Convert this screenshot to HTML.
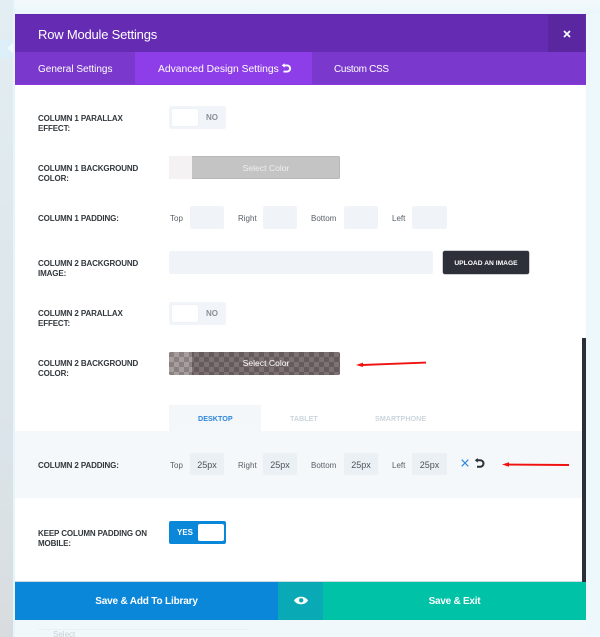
<!DOCTYPE html>
<html><head><meta charset="utf-8"><style>
html,body{margin:0;padding:0}
#p{position:relative;width:600px;height:637px;overflow:hidden;background:#edf7fc;font-family:"Liberation Sans",sans-serif;filter:blur(.3px)}
#p div,#p svg{position:absolute;box-sizing:border-box}
.t{white-space:nowrap}
.l{left:38px;margin-top:1px;font-size:8px;font-weight:bold;line-height:10px;color:#32373c;letter-spacing:-.13px;white-space:nowrap}
.s{margin-top:1px;font-size:8px;color:#5a6068;line-height:12px;white-space:nowrap}
.i{background:#f0f4f8;border-radius:2px;height:23px;width:34px}
.v{background:#ebf0f4;border-radius:2px;height:22px;width:34px;font-size:9px;color:#4c535b;text-align:center;line-height:24px}
.tg{left:169px;width:57px;height:23px;background:#f1f5f9;border-radius:2px}
.kn{left:3px;top:3px;width:26px;height:17px;background:#fff;border-radius:2px;box-shadow:0 0 1px #dde3ea}
.no{left:37px;top:0;line-height:23px;font-size:8px;font-weight:bold;color:#8a9099}
</style></head><body><div id="p">
<div style="left:0;top:0;width:13px;height:637px;background:linear-gradient(#e3eef2,#dbe4e8 70%,#d8dcdf)"></div>
<div style="left:0;top:40px;width:13px;height:18px;background:#dceff8"></div>
<div style="left:7px;top:43px;width:0;height:0;border:5px solid transparent;border-right:6px solid #f2f9fc;border-left:0"></div>
<div style="left:13px;top:0;width:2px;height:637px;background:#e6f5fc"></div>
<div style="left:15px;top:0;width:585px;height:14px;background:linear-gradient(#f4f9fb,#eaf6fb)"></div>
<div style="left:15px;top:620px;width:571px;height:17px;background:#f1f8fb"></div>
<div class="t" style="left:53px;top:630px;font-size:8px;line-height:10px;color:#c8d0d6">Select</div>
<div style="left:38px;top:629px;width:210px;height:1px;background:#e9f1f5"></div>

<div style="left:15px;top:14px;width:571px;height:38px;background:#652bb3;border-top:1px solid #5f26ae"></div>
<div class="t" style="left:38px;top:26px;font-size:13px;letter-spacing:-.2px;line-height:18px;color:#fff">Row Module Settings</div>
<div style="left:548px;top:15px;width:37px;height:37px;background:#5a27a1"></div>
<svg style="left:563px;top:30px" width="8" height="8" viewBox="0 0 8 8"><path d="M1 1L7 7M7 1L1 7" stroke="#fff" stroke-width="1.7"/></svg>

<div style="left:15px;top:52px;width:571px;height:33px;background:#7a39cc;border-bottom:1px solid #8d3ae0"></div>
<div style="left:135px;top:52px;width:177px;height:33px;background:#8e3ee8;border-bottom:1px solid #8d3ae0"></div>
<div class="t" style="left:38px;top:63px;font-size:10px;line-height:14px;color:#fff">General Settings</div>
<div class="t" style="left:158px;top:63px;font-size:10.3px;line-height:14px;color:#fff">Advanced Design Settings</div>
<svg style="left:281px;top:63px" width="10" height="11" viewBox="0 0 10 11"><path d="M3 2.4H6A3 3 0 1 1 6 8.6H2.5" fill="none" stroke="#fff" stroke-width="1.9"/><path d="M3.6 .3V4.6L.8 2.4Z" fill="#fff"/></svg>
<div class="t" style="left:334px;top:63px;font-size:10px;letter-spacing:-.3px;line-height:14px;color:#fff">Custom CSS</div>

<div style="left:15px;top:85px;width:571px;height:497px;background:#fff"></div>
<div style="left:582px;top:338px;width:4px;height:244px;background:#2b3038"></div>

<div class="l" style="top:113px">COLUMN 1 PARALLAX<br>EFFECT:</div>
<div class="tg" style="top:106px"><div class="kn"></div><div class="no">NO</div></div>

<div class="l" style="top:163px">COLUMN 1 BACKGROUND<br>COLOR:</div>
<div style="left:169px;top:156px;width:171px;height:23px;background:#c4c4c4;border-radius:2px;overflow:hidden;box-shadow:inset 0 0 0 1px #b8b8b8"><div style="left:0;top:0;width:23px;height:23px;background:#f4f2f2"></div><div class="t" style="left:23px;width:148px;top:0;text-align:center;line-height:25px;font-size:8.6px;color:#eee">Select Color</div></div>

<div class="l" style="top:213px">COLUMN 1 PADDING:</div>
<div class="s" style="left:170px;top:212px">Top</div><div class="i" style="left:190px;top:206px"></div>
<div class="s" style="left:238px;top:212px">Right</div><div class="i" style="left:263px;top:206px"></div>
<div class="s" style="left:311px;top:212px">Bottom</div><div class="i" style="left:344px;top:206px"></div>
<div class="s" style="left:392px;top:212px">Left</div><div class="i" style="left:412px;top:206px;width:35px"></div>

<div class="l" style="top:258px">COLUMN 2 BACKGROUND<br>IMAGE:</div>
<div class="i" style="left:169px;top:251px;width:264px"></div>
<div class="t" style="left:443px;top:251px;width:86px;height:23px;background:#2d3039;border-radius:2px;box-shadow:0 0 0 .5px #9a9da3;color:#fff;font-size:6.7px;font-weight:bold;text-align:center;line-height:25px">UPLOAD AN IMAGE</div>

<div class="l" style="top:308px">COLUMN 2 PARALLAX<br>EFFECT:</div>
<div class="tg" style="top:302px"><div class="kn"></div><div class="no">NO</div></div>

<div class="l" style="top:358px">COLUMN 2 BACKGROUND<br>COLOR:</div>
<div style="left:169px;top:352px;width:171px;height:23px;border-radius:2px;overflow:hidden;background-color:#665a5b;background-image:linear-gradient(45deg,#7d7273 25%,transparent 25%,transparent 75%,#7d7273 75%),linear-gradient(45deg,#7d7273 25%,transparent 25%,transparent 75%,#7d7273 75%);background-size:10px 10px;background-position:0 0,5px 5px"><div style="left:0;top:0;width:23px;height:23px;background-color:#8a8082;background-image:linear-gradient(45deg,#a59d9e 25%,transparent 25%,transparent 75%,#a59d9e 75%),linear-gradient(45deg,#a59d9e 25%,transparent 25%,transparent 75%,#a59d9e 75%);background-size:10px 10px;background-position:0 0,5px 5px"></div><div class="t" style="left:23px;width:148px;top:0;text-align:center;line-height:23px;font-size:8.6px;color:#fff">Select Color</div></div>
<svg style="left:354px;top:360px" width="74" height="8" viewBox="0 0 74 8"><path d="M72 2.6L8 5" stroke="#f01010" stroke-width="1.9" fill="none"/><path d="M2 5L9 2.6V7Z" fill="#f01010"/></svg>

<div style="left:169px;top:405px;width:92px;height:26px;background:#f4f7fa"></div>
<div class="t" style="left:198px;top:414px;font-size:7.2px;font-weight:bold;line-height:10px;color:#2b87da">DESKTOP</div>
<div class="t" style="left:290px;top:414px;font-size:7.2px;font-weight:bold;line-height:10px;color:#ccd5dd">TABLET</div>
<div class="t" style="left:375px;top:414px;font-size:7.2px;font-weight:bold;line-height:10px;color:#ccd5dd">SMARTPHONE</div>
<div style="left:15px;top:431px;width:567px;height:67px;background:#f4f8fb"></div>
<div class="l" style="top:460px">COLUMN 2 PADDING:</div>
<div class="s" style="left:170px;top:459px">Top</div><div class="v" style="left:190px;top:453px">25px</div>
<div class="s" style="left:238px;top:459px">Right</div><div class="v" style="left:263px;top:453px">25px</div>
<div class="s" style="left:311px;top:459px">Bottom</div><div class="v" style="left:344px;top:453px">25px</div>
<div class="s" style="left:392px;top:459px">Left</div><div class="v" style="left:412px;top:453px;width:35px">25px</div>
<svg style="left:461px;top:459px" width="8" height="8" viewBox="0 0 8 8"><path d="M.7 .7L7.3 7.3M7.3 .7L.7 7.3" stroke="#2b87da" stroke-width="1.1"/></svg>
<svg style="left:474px;top:458px" width="11" height="11" viewBox="0 0 11 11"><path d="M3 2.2H6.2A3.2 3.2 0 1 1 6.2 8.8H3" fill="none" stroke="#2b3038" stroke-width="2"/><path d="M3.8 0V4.6L.8 2.3Z" fill="#2b3038"/></svg>
<svg style="left:500px;top:461px" width="71" height="7" viewBox="0 0 71 7"><path d="M69 4L8 3.6" stroke="#f01010" stroke-width="1.9" fill="none"/><path d="M2 3.5L9 1.2V5.8Z" fill="#f01010"/></svg>

<div class="l" style="top:528px">KEEP COLUMN PADDING ON<br>MOBILE:</div>
<div style="left:169px;top:521px;width:57px;height:23px;background:#0a87d9;border-radius:2px"><div style="left:29px;top:3px;width:26px;height:17px;background:#fff;border-radius:2px"></div><div style="left:8px;top:0;line-height:23px;font-size:8px;font-weight:bold;color:#fff">YES</div></div>

<div style="left:15px;top:582px;width:263px;height:38px;background:#0a87d9;color:#fff;font-size:10px;letter-spacing:-.17px;font-weight:bold;text-align:center;line-height:39px">Save &amp; Add To Library</div>
<div style="left:278px;top:582px;width:45px;height:38px;background:#09a9b6"></div>
<svg style="left:294px;top:595px" width="14" height="11" viewBox="0 0 14 11"><path d="M0 5.5C3 .5 11 .5 14 5.5C11 10.5 3 10.5 0 5.5Z" fill="#fff"/><circle cx="7.2" cy="5.3" r="2.2" fill="#09a9b6"/></svg>
<div style="left:323px;top:582px;width:263px;height:38px;background:#00c2a7;color:#fff;font-size:10px;letter-spacing:-.25px;font-weight:bold;text-align:center;line-height:39px">Save &amp; Exit</div>
<div style="left:15px;top:581px;width:567px;height:1px;background:#cfdbe3"></div>
</div></body></html>
